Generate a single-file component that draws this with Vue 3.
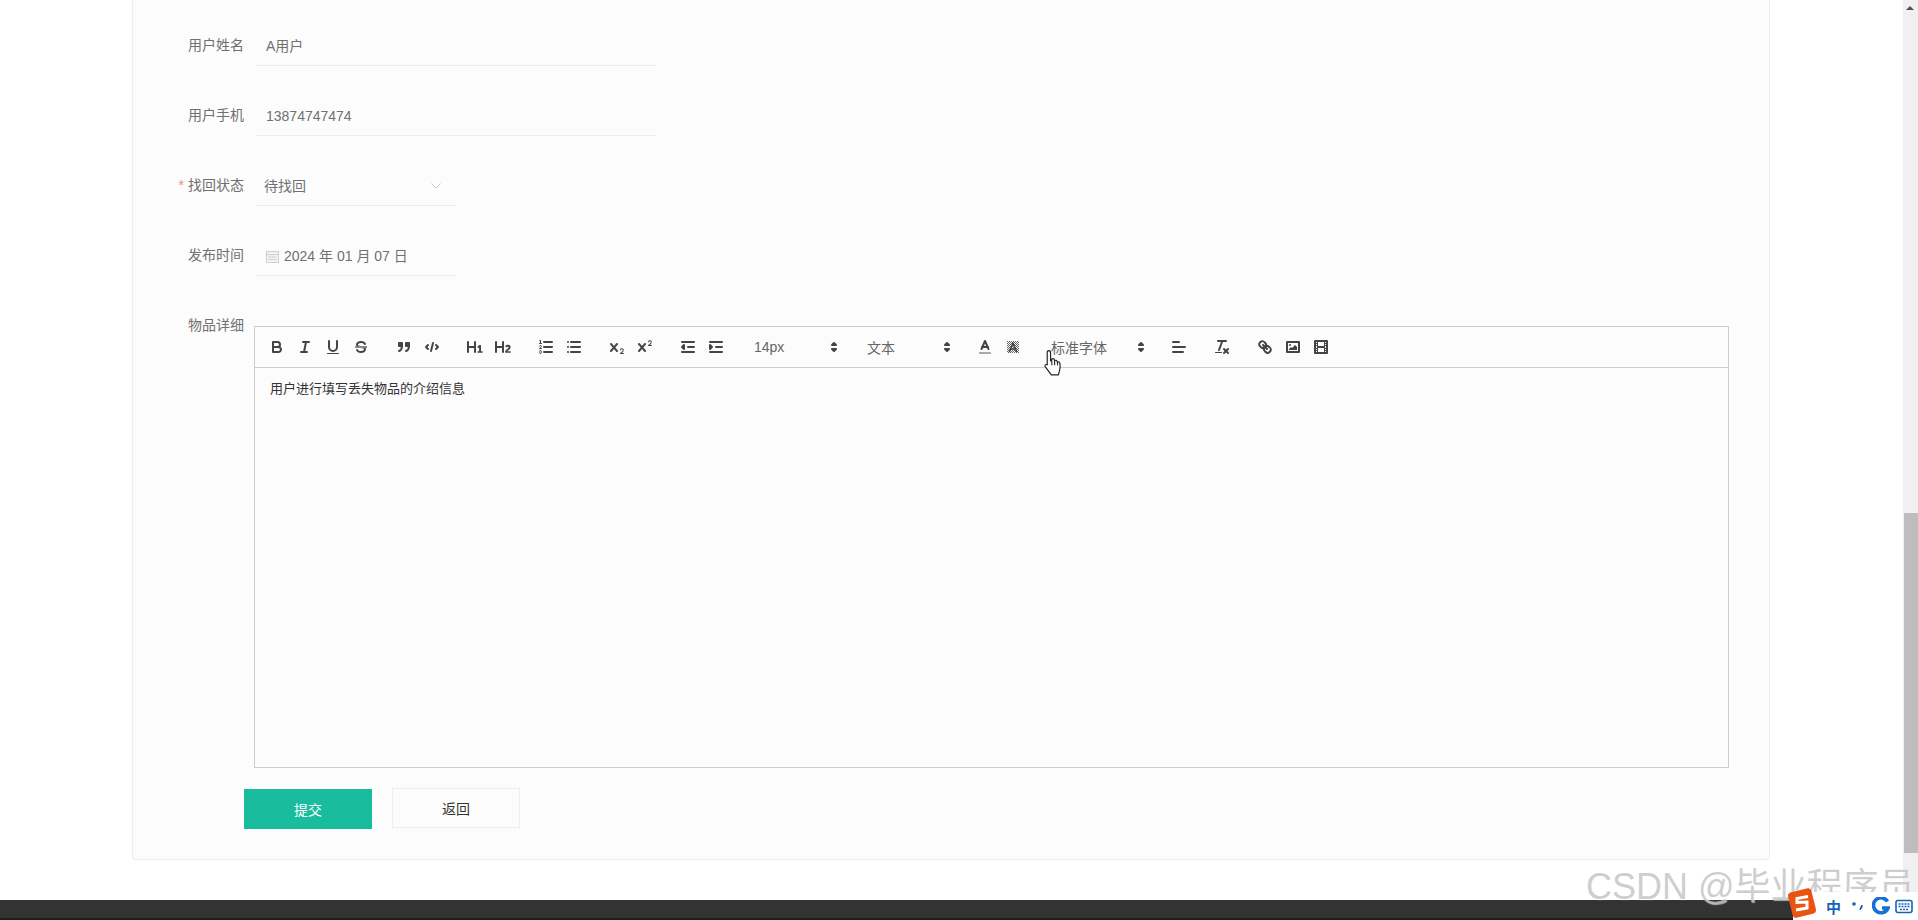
<script setup>
const fields = [
  { label: '用户姓名', value: 'A用户' },
  { label: '用户手机', value: '13874747474' }
];
</script>

<template>
  <div class="app">
    <div class="main">
      <div class="page">
        <div class="card">
          <div v-for="f in fields" :key="f.label" class="row">
            <div class="label">{{ f.label }}</div>
            <div class="input">{{ f.value }}</div>
          </div>
          <div class="row">
            <div class="label"><span class="star">*</span>找回状态</div>
            <div class="input input--short input--select">
              <span>待找回</span>
              <svg class="chevron" viewBox="0 0 12 8"><polyline points="1.5 1.5 6 6 10.5 1.5" /></svg>
            </div>
          </div>
          <div class="row">
            <div class="label">发布时间</div>
            <div class="input input--short input--date">
              <svg class="cal" viewBox="0 0 13 13">
                <rect x="0.5" y="1.5" width="12" height="11" />
                <line x1="0.5" x2="12.5" y1="4.5" y2="4.5" />
                <line x1="2.5" x2="10.5" y1="7" y2="7" />
                <line x1="2.5" x2="10.5" y1="9.5" y2="9.5" />
              </svg>
              <span>2024 年 01 月 07 日</span>
            </div>
          </div>

          <div class="row row--editor">
            <div class="label label--top">物品详细</div>
            <div class="editor">
              <div class="toolbar">
                <span class="formats">
                  <button><svg viewBox="0 0 18 18"><path class="s" d="M5,4H9.5A2.5,2.5,0,0,1,12,6.5v0A2.5,2.5,0,0,1,9.5,9H5A0,0,0,0,1,5,9V4A0,0,0,0,1,5,4Z" /><path class="s" d="M5,9h5.5A2.5,2.5,0,0,1,13,11.5v0A2.5,2.5,0,0,1,10.5,14H5a0,0,0,0,1,0,0V9A0,0,0,0,1,5,9Z" /></svg></button>
                  <button><svg viewBox="0 0 18 18"><line class="s" x1="7" x2="13" y1="4" y2="4" /><line class="s" x1="5" x2="11" y1="14" y2="14" /><line class="s" x1="8" x2="10" y1="14" y2="4" /></svg></button>
                  <button><svg viewBox="0 0 18 18"><path class="s" d="M5,3V9a4.012,4.012,0,0,0,4,4H9a4.012,4.012,0,0,0,4-4V3" /><rect class="f" height="1" rx="0.5" ry="0.5" width="12" x="3" y="15" /></svg></button>
                  <button><svg viewBox="0 0 18 18"><line class="s strike" x1="15" x2="3" y1="9" y2="9" /><path class="f" d="M9.007,8C6.542,7.791,6,7.519,6,6.5,6,5.792,7.283,5,9,5c1.571,0,2.765.679,2.969,1.309a1,1,0,0,0,1.9-.617C13.356,4.106,11.354,3,9,3,6.2,3,4,4.538,4,6.5a3.2,3.2,0,0,0,.5,1.843Z" /><path class="f" d="M8.984,10C11.457,10.208,12,10.479,12,11.5c0,.708-1.283,1.5-3,1.5-1.571,0-2.765-.679-2.969-1.309a1,1,0,1,0-1.9.617C4.644,13.894,6.646,15,9,15c2.8,0,5-1.538,5-3.5a3.2,3.2,0,0,0-.5-1.843Z" /></svg></button>
                </span>
                <span class="formats">
                  <button><svg viewBox="0 0 18 18"><rect class="f s" height="3" width="3" x="4" y="5" /><rect class="f s" height="3" width="3" x="11" y="5" /><path class="s" d="M7,8c0,4.031-3,5-3,5" /><path class="s" d="M14,8c0,4.031-3,5-3,5" /></svg></button>
                  <button><svg viewBox="0 0 18 18"><polyline class="s" points="5 7 3 9 5 11 5 11" /><polyline class="s" points="13 7 15 9 13 11 13 11" /><line class="s" x1="10" x2="8" y1="5" y2="13" /></svg></button>
                </span>
                <span class="formats">
                  <button><svg viewBox="0 0 18 18"><path class="f" d="M10,4V14a1,1,0,0,1-2,0V10H3v4a1,1,0,0,1-2,0V4A1,1,0,0,1,3,4V8H8V4a1,1,0,0,1,2,0Zm6.06787,9.209H14.98975V7.59863a.54085.54085,0,0,0-.605-.60547h-.62744a1.01119,1.01119,0,0,0-.748.29688L11.645,8.56641a.5435.5435,0,0,0-.022.8584l.28613.30762a.53861.53861,0,0,0,.84717.0332l.09912-.08789a1.2137,1.2137,0,0,0,.2417-.35254h.02246s-.01123.30859-.01123.60547V13.209H12.041a.54085.54085,0,0,0-.605.60547v.43945a.54085.54085,0,0,0,.605.60547h4.02686a.54085.54085,0,0,0,.605-.60547v-.43945A.54085.54085,0,0,0,16.06787,13.209Z" /></svg></button>
                  <button><svg viewBox="0 0 18 18"><path class="f" d="M16.73975,13.81445v.43945a.54085.54085,0,0,1-.605.60547H11.855a.58392.58392,0,0,1-.64893-.60547V14.0127c0-2.90527,3.39941-3.42187,3.39941-4.55469a.77675.77675,0,0,0-.84717-.78125,1.17684,1.17684,0,0,0-.83594.38477c-.2749.26367-.561.374-.85791.13184l-.4292-.34082c-.30811-.24219-.38525-.51758-.1543-.81445a2.97155,2.97155,0,0,1,2.45361-1.17676,2.45393,2.45393,0,0,1,2.68408,2.40918c0,2.45312-3.1792,2.92676-3.27832,3.93848h2.79443A.54085.54085,0,0,1,16.73975,13.81445ZM9,3A.99974.99974,0,0,0,8,4V8H3V4A1,1,0,0,0,1,4V14a1,1,0,0,0,2,0V10H8v4a1,1,0,0,0,2,0V4A.99974.99974,0,0,0,9,3Z" /></svg></button>
                </span>
                <span class="formats">
                  <button><svg viewBox="0 0 18 18"><line class="s" x1="7" x2="15" y1="4" y2="4" /><line class="s" x1="7" x2="15" y1="9" y2="9" /><line class="s" x1="7" x2="15" y1="14" y2="14" /><line class="s t" x1="2.5" x2="4.5" y1="5.5" y2="5.5" /><path class="f" d="M3.5,6A0.5,0.5,0,0,1,3,5.5V3.085l-0.276.138A0.5,0.5,0,0,1,2.053,3c-0.124-.247-0.023-0.324.224-0.447l1-.5A0.5,0.5,0,0,1,4,2.5v3A0.5,0.5,0,0,1,3.5,6Z" /><path class="s t" d="M4.5,10.5h-2c0-.234,1.85-1.076,1.85-2.234A0.959,0.959,0,0,0,2.5,8.156" /><path class="s t" d="M2.5,14.846a0.959,0.959,0,0,0,1.85-.109A0.7,0.7,0,0,0,3.75,14a0.688,0.688,0,0,0,.6-0.736,0.959,0.959,0,0,0-1.85-.109" /></svg></button>
                  <button><svg viewBox="0 0 18 18"><line class="s" x1="6" x2="15" y1="4" y2="4" /><line class="s" x1="6" x2="15" y1="9" y2="9" /><line class="s" x1="6" x2="15" y1="14" y2="14" /><line class="s" x1="3" x2="3" y1="4" y2="4" /><line class="s" x1="3" x2="3" y1="9" y2="9" /><line class="s" x1="3" x2="3" y1="14" y2="14" /></svg></button>
                </span>
                <span class="formats">
                  <button><svg viewBox="0 0 18 18"><path class="f" d="M15.5,15H13.861a3.858,3.858,0,0,0,1.914-2.975,1.8,1.8,0,0,0-1.6-1.751A1.921,1.921,0,0,0,12.021,11.7a0.50013,0.50013,0,1,0,.957.291h0a0.914,0.914,0,0,1,1.053-.725,0.81,0.81,0,0,1,.744.762c0,1.076-1.16971,1.86982-1.93971,2.43082A1.45639,1.45639,0,0,0,12,15.5a0.5,0.5,0,0,0,.5.5h3A0.5,0.5,0,0,0,15.5,15Z" /><path class="f" d="M9.65,5.241a1,1,0,0,0-1.409.108L6,7.964,3.759,5.349A1,1,0,0,0,2.192,6.59178Q2.21541,6.6213,2.241,6.649L4.684,9.5,2.241,12.35A1,1,0,0,0,3.71,13.70722q0.02557-.02768.049-0.05722L6,11.036,8.241,13.65a1,1,0,1,0,1.567-1.24277Q9.78459,12.3777,9.759,12.35L7.316,9.5,9.759,6.651A1,1,0,0,0,9.65,5.241Z" /></svg></button>
                  <button><svg viewBox="0 0 18 18"><path class="f" d="M15.5,7H13.861a4.015,4.015,0,0,0,1.914-2.975,1.8,1.8,0,0,0-1.6-1.751A1.922,1.922,0,0,0,12.021,3.7a0.5,0.5,0,1,0,.957.291,0.917,0.917,0,0,1,1.053-.725,0.81,0.81,0,0,1,.744.762c0,1.077-1.164,1.925-1.934,2.486A1.423,1.423,0,0,0,12,7.5a0.5,0.5,0,0,0,.5.5h3A0.5,0.5,0,0,0,15.5,7Z" /><path class="f" d="M9.651,5.241a1,1,0,0,0-1.41.108L6,7.964,3.759,5.349a1,1,0,1,0-1.519,1.3L4.683,9.5,2.241,12.35a1,1,0,1,0,1.519,1.3L6,11.036l2.241,2.616a1,1,0,0,0,1.519-1.3L7.317,9.5,9.759,6.651A1,1,0,0,0,9.651,5.241Z" /></svg></button>
                </span>
                <span class="formats">
                  <button><svg viewBox="0 0 18 18"><line class="s" x1="3" x2="15" y1="14" y2="14" /><line class="s" x1="3" x2="15" y1="4" y2="4" /><line class="s" x1="9" x2="15" y1="9" y2="9" /><polyline class="f s" points="5 7 5 11 3 9 5 7" /></svg></button>
                  <button><svg viewBox="0 0 18 18"><line class="s" x1="3" x2="15" y1="14" y2="14" /><line class="s" x1="3" x2="15" y1="4" y2="4" /><line class="s" x1="9" x2="15" y1="9" y2="9" /><polyline class="f s" points="3 7 3 11 5 9 3 7" /></svg></button>
                </span>
                <span class="formats">
                  <span class="picker"><span>14px</span><svg viewBox="0 0 18 18"><polygon class="s" points="7 11 9 13 11 11 7 11" /><polygon class="s" points="7 7 9 5 11 7 7 7" /></svg></span>
                </span>
                <span class="formats">
                  <span class="picker"><span>文本</span><svg viewBox="0 0 18 18"><polygon class="s" points="7 11 9 13 11 11 7 11" /><polygon class="s" points="7 7 9 5 11 7 7 7" /></svg></span>
                </span>
                <span class="formats">
                  <button><svg viewBox="0 0 18 18"><line class="s m label-line" x1="3" x2="15" y1="15" y2="15" /><polyline class="s" points="5.500 11 9 3 12.500 11" /><line class="s" x1="11.630" x2="6.380" y1="9" y2="9" /></svg></button>
                  <button><svg viewBox="0 0 18 18"><defs><pattern id="hatch" width="2" height="2" patternUnits="userSpaceOnUse"><rect width="1" height="1" fill="#666" /><rect x="1" y="1" width="1" height="1" fill="#666" /></pattern></defs><rect x="3" y="3" width="12" height="12" fill="url(#hatch)" /><polyline class="s s--thin" points="5.500 13.500 9 5 12.500 13.500" /><line class="s s--thin" x1="11.630" x2="6.380" y1="11" y2="11" /></svg></button>
                </span>
                <span class="formats">
                  <span class="picker picker--wide"><span>标准字体</span><svg viewBox="0 0 18 18"><polygon class="s" points="7 11 9 13 11 11 7 11" /><polygon class="s" points="7 7 9 5 11 7 7 7" /></svg></span>
                </span>
                <span class="formats">
                  <button><svg viewBox="0 0 18 18"><line class="s" x1="3" x2="15" y1="9" y2="9" /><line class="s" x1="3" x2="13" y1="14" y2="14" /><line class="s" x1="3" x2="9" y1="4" y2="4" /></svg></button>
                </span>
                <span class="formats">
                  <button><svg viewBox="0 0 18 18"><line class="s" x1="5" x2="13" y1="3" y2="3" /><line class="s" x1="6" x2="9.350" y1="12" y2="3" /><line class="s" x1="11" x2="15" y1="11" y2="15" /><line class="s" x1="15" x2="11" y1="11" y2="15" /><rect class="f" height="1" rx="0.5" ry="0.5" width="7" x="2" y="14" /></svg></button>
                </span>
                <span class="formats">
                  <button><svg viewBox="0 0 18 18"><line class="s" x1="7" x2="11" y1="7" y2="11" /><path class="s" d="M8.9,4.577a3.476,3.476,0,0,1,.36,4.679A3.476,3.476,0,0,1,4.577,8.9C3.185,7.5,2.035,6.4,4.217,4.217S7.5,3.185,8.9,4.577Z" /><path class="s" d="M13.423,9.1a3.476,3.476,0,0,0-4.679-.36,3.476,3.476,0,0,0,.36,4.679c1.392,1.392,2.5,2.542,4.679.36S14.815,10.5,13.423,9.1Z" /></svg></button>
                  <button><svg viewBox="0 0 18 18"><rect class="s" height="10" width="12" x="3" y="4" /><circle class="f" cx="6" cy="7" r="1" /><polyline class="f" points="5 12 5 11 7 9 8 10 11 7 13 9 13 12 5 12" /></svg></button>
                  <button><svg viewBox="0 0 18 18"><rect class="s" height="12" width="12" x="3" y="3" /><rect class="f" height="12" width="1" x="5" y="3" /><rect class="f" height="12" width="1" x="12" y="3" /><rect class="f" height="2" width="8" x="5" y="8" /><rect class="f" height="1" width="3" x="3" y="5" /><rect class="f" height="1" width="3" x="3" y="7" /><rect class="f" height="1" width="3" x="3" y="10" /><rect class="f" height="1" width="3" x="3" y="12" /><rect class="f" height="1" width="3" x="12" y="5" /><rect class="f" height="1" width="3" x="12" y="7" /><rect class="f" height="1" width="3" x="12" y="10" /><rect class="f" height="1" width="3" x="12" y="12" /></svg></button>
                </span>
              </div>
              <div class="content">用户进行填写丢失物品的介绍信息</div>
            </div>
          </div>

          <div class="actions">
            <button class="btn btn--primary">提交</button>
            <button class="btn btn--plain">返回</button>
          </div>
        </div>
      </div>
      <div class="scrollbar">
        <div class="scroll-arrow"></div>
        <div class="scroll-track"></div>
        <div class="scroll-thumb"></div>
        <div class="scroll-rest"></div>
      </div>
    </div>
    <div class="footer"></div>

    <!-- things lying over the page: cursor, watermark, input method bar -->
    <svg class="cursor" viewBox="0 0 20 26">
      <path d="M5 1.500c1.200 0 1.800.8 1.800 2V11l1-.3V9.400c1-.9 2.200-.6 2.500.5l.2 1c.9-.8 2.100-.5 2.400.6l.2.8c1-.6 2.200-.2 2.400 1 .4 2.500.3 5-.4 7l-1 3.700H7.500L2 16.600c-.9-1.300 0-2.700 1.600-2l.1.1V3.500c0-1.200.3-2 1.300-2z" fill="#fff" stroke="#222" stroke-width="1.100" stroke-linejoin="round" />
      <path d="M8 11v4M10.600 11v4M13.300 12v3" stroke="#222" stroke-width="1" fill="none" />
    </svg>
    <div class="watermark">CSDN @毕业程序员</div>
    <div class="ime">
      <svg class="ime-logo" viewBox="0 0 30 32">
        <rect x="3" y="3" width="24" height="26" rx="4" fill="#ea5413" transform="rotate(-14 15 16)" />
        <path d="M21 9.500 10 11.500 10 15.500 20 15 20 21 9 23" fill="none" stroke="#fff" stroke-width="3" />
      </svg>
      <span class="ime-zh">中</span>
      <svg class="ime-dots" viewBox="0 0 14 12"><circle cx="3" cy="4" r="1.800" fill="#1763b8" /><path d="M11 5c.5 2-.3 3.500-2 5 .2-1.200.2-2.500 2-5z" fill="#1763b8" stroke="#1763b8" /></svg>
      <svg class="ime-moon" viewBox="0 0 18 18"><path d="M15.500 4.500A7.500 7.500 0 1 0 16 11H10" fill="none" stroke="#1673d6" stroke-width="3.600" /></svg>
      <svg class="ime-kbd" viewBox="0 0 18 14"><rect x="1" y="1" width="16" height="12" rx="2" fill="#fff" stroke="#1763b8" stroke-width="1.600" /><path d="M3.500 4.500h11M3.500 7h11M5 10h8" stroke="#1763b8" stroke-width="1.500" stroke-dasharray="2 1" /></svg>
    </div>
  </div>
</template>

<style>
html, body {
  margin: 0;
  background: #fff;
  overflow: hidden;
}
</style>

<style scoped>
.app {
  position: relative;
  height: 920px;
  display: flex;
  flex-direction: column;
  overflow: hidden;
  font-family: "Liberation Sans", "Noto Sans CJK SC", sans-serif;
  font-size: 14px;
  color: #666;
}
.main {
  flex: 1;
  display: flex;
  min-height: 0;
}
.page {
  flex: 1;
  padding: 0 133px 0 132px;
  min-width: 0;
}
.card {
  height: 860px;
  box-sizing: border-box;
  padding: 26px 40px 0 0;
  background: #fcfcfc;
  border: 1px solid #eee;
  border-top: none;
  border-radius: 0 0 4px 4px;
}
.row {
  display: flex;
  height: 40px;
  margin-bottom: 30px;
}
.label {
  width: 111px;
  margin-right: 12px;
  flex: none;
  line-height: 39px;
  text-align: right;
  color: #707070;
}
.star {
  margin-right: 4px;
  color: #e88;
}
.input {
  width: 400px;
  box-sizing: border-box;
  height: 40px;
  line-height: 40px;
  padding-left: 10px;
  border-bottom: 1px solid #e8eeee;
  color: #707070;
}
.input--short {
  width: 200px;
}
.input--select {
  display: flex;
  justify-content: space-between;
  align-items: center;
  padding: 1px 14px 0 8px;
}
.chevron {
  width: 12px;
  height: 8px;
  fill: none;
  stroke: #c8cccc;
  stroke-width: 1;
}
.input--date {
  display: flex;
  align-items: center;
  gap: 5px;
  padding-top: 1px;
}
.cal {
  width: 13px;
  height: 13px;
  fill: #f2f2f2;
  stroke: #d0d0d0;
  stroke-width: 1;
}
.row--editor {
  height: 462px;
  margin-bottom: 0;
}
.label--top {
  height: 40px;
}
.editor {
  flex: 1;
  margin: 20px 0 0 -2px;
  height: 442px;
  box-sizing: border-box;
  border: 1px solid #ccc;
  display: flex;
  flex-direction: column;
}
.toolbar {
  height: 41px;
  box-sizing: border-box;
  padding: 8px;
  display: flex;
  border-bottom: 1px solid #ccc;
}
.formats {
  display: flex;
  margin-right: 15px;
}
.toolbar button {
  width: 28px;
  height: 24px;
  padding: 3px 5px;
  border: none;
  background: none;
  display: block;
}
.toolbar svg {
  display: block;
  width: 18px;
  height: 18px;
}
.s {
  fill: none;
  stroke: #444;
  stroke-width: 2;
  stroke-linecap: round;
  stroke-linejoin: round;
}
.s.t {
  stroke-width: 1;
}
.s.s--thin {
  stroke-width: 1.600;
}
.s.m {
  stroke-linecap: square;
  stroke-linejoin: miter;
  stroke-miterlimit: 2;
}
.s.strike {
  stroke-width: 1.500;
  stroke-linecap: butt;
  stroke: #666;
}
.s.f {
  fill: #444;
}
.f {
  fill: #444;
}
.s.label-line {
  stroke: #aaa;
  stroke-linecap: butt;
}
.picker {
  width: 98px;
  height: 24px;
  box-sizing: border-box;
  padding-left: 9px;
  display: flex;
  justify-content: space-between;
  align-items: center;
  font-weight: 400;
  color: #666;
}
.picker--wide {
  width: 108px;
}
.content {
  flex: 1;
  padding: 11px 15px;
  font-size: 13px;
  line-height: 19.500px;
  color: #333;
}
.actions {
  display: flex;
  align-items: flex-start;
  gap: 20px;
  margin-top: 20px;
  padding-left: 111px;
}
.btn {
  width: 128px;
  height: 40px;
  font: inherit;
  border-radius: 0;
}
.btn--primary {
  margin-top: 1px;
  border: none;
  background: #19bc9c;
  color: #fff;
}
.btn--plain {
  border: 1px solid #eee;
  background: #fcfcfc;
  color: #333;
}
.scrollbar {
  width: 15px;
  display: flex;
  flex-direction: column;
  background: #f0f0f0;
}
.scroll-arrow {
  height: 15px;
  position: relative;
}
.scroll-arrow::after {
  content: "";
  position: absolute;
  left: 3px;
  top: 6px;
  border: 4px solid transparent;
  border-top: none;
  border-bottom: 4px solid #505050;
}
.scroll-track {
  height: 498px;
}
.scroll-thumb {
  height: 340px;
  margin-left: 1px;
  background: #bdbdbd;
}
.footer {
  height: 20px;
  background: #333;
  border-bottom: 2px solid #1f1f1f;
  box-sizing: border-box;
}
.cursor {
  position: absolute;
  left: 1043px;
  top: 349px;
  width: 22px;
  height: 28px;
}
.watermark {
  position: absolute;
  left: 1586px;
  top: 866px;
  font-size: 36px;
  line-height: 42px;
  white-space: nowrap;
  color: rgba(190, 190, 190, 0.75);
  text-shadow: 1px 1px 1px rgba(255, 255, 255, 0.6);
}
.ime {
  position: absolute;
  right: 0;
  top: 892px;
  width: 125px;
  height: 28px;
  background: #fff;
  display: flex;
  align-items: center;
  padding-left: 30px;
  box-sizing: border-box;
}
.ime-logo {
  position: absolute;
  left: -6px;
  top: -5px;
  width: 30px;
  height: 32px;
}
.ime-zh {
  margin-left: 3px;
  font-size: 15px;
  font-weight: 700;
  color: #1763b8;
}
.ime-dots {
  margin-left: 10px;
  width: 14px;
  height: 12px;
}
.ime-moon {
  margin-left: 7px;
  width: 18px;
  height: 18px;
}
.ime-kbd {
  margin-left: 5px;
  width: 18px;
  height: 15px;
}
</style>
